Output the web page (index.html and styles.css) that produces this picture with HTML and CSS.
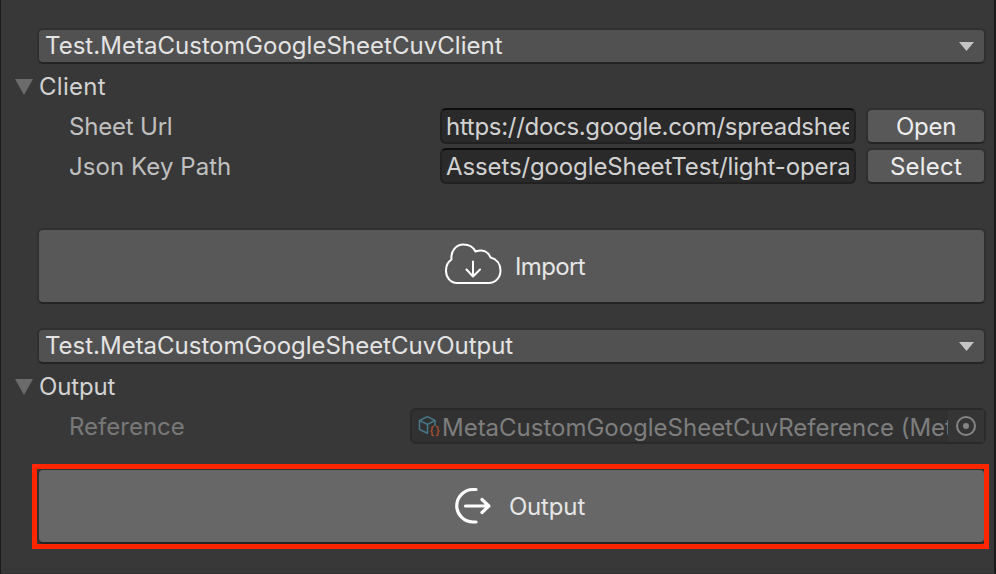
FILE: index.html
```html
<!DOCTYPE html>
<html lang="en">
<head>
<meta charset="utf-8">
<title>Inspector</title>
<link rel="stylesheet" href="styles.css">
</head>
<body>
<main class="panel">
  <div class="box dropdown"><span>Test.MetaCustomGoogleSheetCuvClient</span><svg class="caret" width="15" height="9" viewBox="0 0 15 9"><path d="M0 0H15L7.500 9Z"/></svg></div>
  <div class="foldout"><svg width="18" height="16" viewBox="0 0 18 16"><path d="M0 0H18L9 16Z"/></svg><span class="client">Client</span></div>
  <div class="row">
    <span class="label url">Sheet Url</span>
    <div class="field"><span class="clip address">https://docs.google.com/spreadsheets</span></div>
    <button class="box small">Open</button>
  </div>
  <div class="row">
    <span class="label">Json Key Path</span>
    <div class="field"><span class="clip path">Assets/googleSheetTest/light-operation</span></div>
    <button class="box small select">Select</button>
  </div>
  <button class="box big import">
    <svg width="58" height="42" viewBox="444 243 58 42"><path d="M457 283C450 283 446 277 446 270.500C446 265 448.500 261.500 451.500 259.500C450.500 250.500 456.500 244.500 463.500 244.500C469 244.500 473.500 247.500 475.500 251.500C483 248.500 488.500 252 490.500 257.500C496.500 259 500.500 264 500.500 270.500C500.500 277.500 495.500 283 488.500 283ZM473 261.500V276.500M466.500 269.500L473 276.500L480 269.500"/></svg>
    <span>Import</span>
  </button>
  <div class="box dropdown"><span class="out">Test.MetaCustomGoogleSheetCuvOutput</span><svg class="caret" width="15" height="9" viewBox="0 0 15 9"><path d="M0 0H15L7.500 9Z"/></svg></div>
  <div class="foldout"><svg width="18" height="16" viewBox="0 0 18 16"><path d="M0 0H18L9 16Z"/></svg><span class="tight">Output</span></div>
  <div class="row disabled">
    <span class="label">Reference</span>
    <div class="object">
      <svg class="asset" width="22" height="22" viewBox="418 416 22 22"><path class="cube" d="M428 434.500L419.500 430.500V421.500L427.500 417.500L435 421.500V427M419.500 421.500L427.500 425.500L435 421.500M427.500 425.500V434.500"/><path class="braces" d="M434 427.500H433Q432 427.500 432 428.700V430.800Q432 432 430.500 432Q432 432 432 433.200V435.300Q432 436.500 433 436.500H434M436 427.500H437Q438 427.500 438 428.700V430.800Q438 432 439.500 432Q438 432 438 433.200V435.300Q438 436.500 437 436.500H436"/></svg>
      <span class="clip ref">MetaCustomGoogleSheetCuvReference (MetaCustom)</span>
      <span class="picker"><svg width="22" height="22" viewBox="0 0 22 22"><circle cx="11" cy="11" r="9"/><circle class="dot" cx="11" cy="11" r="3"/></svg></span>
    </div>
  </div>
  <button class="box big output">
    <svg width="40" height="40" viewBox="453 486 40 40"><path d="M477 489.500H474A16.250 16.250 0 0 0 474 522H477M466.500 506H490M483 499.500L489.800 506L483 512.500"/></svg>
    <span class="tight">Output</span>
  </button>
</main>
</body>
</html>
```
FILE: styles.css
```css
* { box-sizing: border-box; }

body {
  margin: 0;
  background: #383838;
  font-family: Inter, "Liberation Sans", sans-serif;
  font-size: 24px;
  line-height: 32px;
  letter-spacing: 0.03px;
  color: #d2d2d2;
  white-space: nowrap;
}

svg { display: block; flex: none; }

.panel {
  height: 574px;
  overflow: hidden;
  padding: 28px 8px 0 36px;
  border-left: 1px solid #1c1c1c;
  border-right: 2px solid #1a1a1a;
  border-bottom: 1px solid #303030;
}

.box {
  display: flex;
  align-items: center;
  border: 2px solid #303030;
  border-bottom-color: #242424;
  border-radius: 6px;
  background: #585858;
  color: #eee;
  font: inherit;
  letter-spacing: inherit;
}

.dropdown {
  justify-content: space-between;
  height: 36px;
  padding: 0 10px 0 6px;
  background: #515151;
  color: #e4e4e4;
}
.out { letter-spacing: -0.01px; }

.caret { fill: #c4c4c4; }

.foldout {
  display: flex;
  align-items: center;
  gap: 6px;
  height: 36px;
  margin: 4px 0 4px -22px;
}
.foldout svg { fill: #6b6b6b; margin-top: 1px; }
.foldout span { padding-top: 2px; }
.client { letter-spacing: 0.3px; }
.tight { letter-spacing: -0.15px; }

.row {
  display: flex;
  align-items: center;
  height: 36px;
  margin-bottom: 4px;
  padding-left: 32px;
}
.label { flex: 1; padding-top: 2px; color: #c0c0c0; letter-spacing: 0.07px; }
.label.url { letter-spacing: -0.2px; }

.field {
  display: flex;
  align-items: center;
  width: 416px;
  height: 36px;
  padding: 2px 5px 0 4px;
  border: 2px solid #212121;
  border-top-color: #0d0d0d;
  border-radius: 6px;
  background: #2a2a2a;
}

.clip { flex: 1; min-width: 0; overflow: hidden; }
.address { letter-spacing: -0.3px; }
.path { letter-spacing: -0.12px; }

.small {
  justify-content: center;
  width: 120px;
  height: 36px;
  margin-left: 10px;
  padding: 2px 0 0;
  letter-spacing: -0.25px;
}
.select { letter-spacing: 0.2px; }

.big {
  justify-content: center;
  width: 100%;
  height: 76px;
  padding: 0;
}
.big svg { fill: none; stroke: #fff; stroke-linecap: round; stroke-linejoin: round; }
.big span { padding-top: 2px; color: #e6e6e6; }

.import { gap: 13px; margin: 44px 0 24px; padding-left: 6px; letter-spacing: -0.6px; }
.import svg { margin-top: -4px; stroke-width: 2; }

.disabled .label { color: #787878; letter-spacing: 0; }

.object {
  display: flex;
  align-items: center;
  width: 576px;
  height: 36px;
  padding-left: 6px;
  border: 2px solid #2a2a2a;
  border-radius: 6px;
  background: #313131;
  color: #7e7e7e;
}
.asset { fill: none; }
.cube { stroke: #477789; stroke-width: 1.5; }
.braces { stroke: #a04c31; stroke-width: 1.5; }
.ref { margin-left: 2px; padding-top: 4px; letter-spacing: -0.01px; }
.picker {
  display: flex;
  align-items: center;
  justify-content: center;
  width: 36px;
  height: 32px;
  background: #353535;
}
.picker svg { fill: none; stroke: #858585; stroke-width: 2; }
.picker .dot { fill: #858585; stroke: none; }

.output {
  position: relative;
  gap: 17px;
  margin-top: 24px;
  padding-left: 14px;
  background: #676767;
}
.output svg { stroke-width: 3.2; }
.output::after {
  content: "";
  position: absolute;
  inset: -6.5px -4.5px -6.5px -7.5px;
  border: 5px solid #ff2600;
}
```
